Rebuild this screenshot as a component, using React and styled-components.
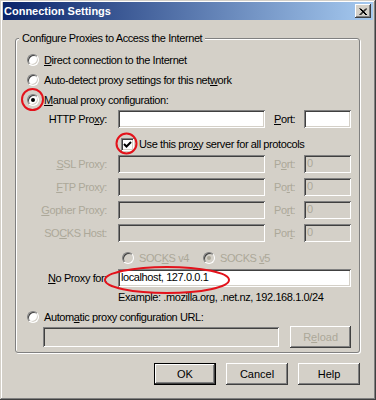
import React from "react";
import styled, { createGlobalStyle, css } from "styled-components";

const GlobalStyle = createGlobalStyle`
    html, body {
        margin: 0;
        padding: 0;
        background: #d4d0c8;
    }
    body {
        font-family: "Liberation Sans", Arial, sans-serif;
        font-size: 11px;
    }
`;

const sunken = css`
    box-shadow: inset 1px 1px #808080, inset -1px -1px #ffffff,
        inset 2px 2px #404040, inset -2px -2px #d4d0c8;
`;

const raised = css`
    box-shadow: inset -1px -1px #404040, inset 1px 1px #ffffff,
        inset -2px -2px #808080, inset 2px 2px #d4d0c8;
`;

const Window = styled.div`
    position: relative;
    width: 376px;
    height: 400px;
    box-sizing: border-box;
    padding: 2px 3px 3px 3px;
    background: #d4d0c8;
    box-shadow: inset -1px -1px #404040, inset 1px 1px #d4d0c8,
        inset -2px -2px #808080, inset 2px 2px #ffffff;
    display: flex;
    flex-direction: column;
    color: #000;
    font: 11px "Liberation Sans", Arial, sans-serif;
    letter-spacing: -0.4px;
`;

const TitleBar = styled.div`
    height: 18px;
    flex-shrink: 0;
    display: flex;
    align-items: center;
    justify-content: space-between;
    padding: 0 2px 0 1px;
    background: linear-gradient(to right, #0a246a, #a6caf0);
    color: #fff;
    font-weight: bold;
    letter-spacing: 0;
`;

const CloseButton = styled.div`
    width: 16px;
    height: 14px;
    box-sizing: border-box;
    background: #d4d0c8;
    display: flex;
    align-items: center;
    justify-content: center;
    ${raised};
`;

const GroupBox = styled.fieldset`
    margin: 12px 13px 0 12px;
    padding: 5px 8px 4px 11px;
    min-width: 0;
    border: 1px solid #808080;
    border-radius: 3px;
    box-shadow: inset 1px 1px #ffffff, 1px 1px #ffffff;
    display: flex;
    flex-direction: column;
`;

const Legend = styled.legend`
    margin-left: -8px;
    padding: 0 3px;
    line-height: 13px;
    background: #d4d0c8;
`;

const OptionRow = styled.label`
    display: flex;
    align-items: center;
    gap: 5px;
    height: ${(p) => p.$h || 20}px;
    color: ${(p) => (p.$disabled ? "#aca899" : "#000")};
    margin-left: ${(p) => p.$indent || 0}px;
`;

const Radio = styled.span`
    width: 12px;
    height: 12px;
    box-sizing: border-box;
    border-radius: 50%;
    flex-shrink: 0;
    border: 1px solid;
    border-color: #808080 #ffffff #ffffff #808080;
    box-shadow: inset 1px 1px #404040, inset -1px -1px #d4d0c8;
    background: ${(p) => (p.$disabled ? "#d4d0c8" : "#ffffff")};
    display: flex;
    align-items: center;
    justify-content: center;

    &::after {
        content: "";
        display: ${(p) => (p.$checked ? "block" : "none")};
        width: 4px;
        height: 4px;
        border-radius: 50%;
        background: ${(p) => (p.$disabled ? "#aca899" : "#000")};
    }
`;

const Check = styled.span`
    width: 13px;
    height: 13px;
    box-sizing: border-box;
    flex-shrink: 0;
    background: #ffffff;
    ${sunken};
    display: flex;
    align-items: center;
    justify-content: center;
`;

const ProxyGrid = styled.div`
    display: grid;
    grid-template-columns: 91px 147px 39px 47px;
    grid-template-rows: 23px 22px 23px 23px 23px 23px 22px 18px 20px;
    align-items: start;
`;

const FieldLabel = styled.span`
    line-height: 18px;
    text-align: ${(p) => (p.$left ? "left" : "right")};
    padding: ${(p) => (p.$left ? "0 0 0 9px" : "0 11px 0 0")};
    white-space: nowrap;
    color: ${(p) => (p.$disabled ? "#aca899" : "#000")};
`;

const TextBox = styled.div`
    height: ${(p) => p.$h || 18}px;
    box-sizing: border-box;
    padding: 0 3px;
    line-height: ${(p) => (p.$h || 18) - 1}px;
    white-space: nowrap;
    overflow: hidden;
    background: ${(p) => (p.$disabled ? "#d4d0c8" : "#ffffff")};
    color: ${(p) => (p.$disabled ? "#aca899" : "#000")};
    grid-column: ${(p) => p.$span || "auto"};
    ${sunken};
`;

const SpanRow = styled.div`
    grid-column: ${(p) => p.$span};
    align-self: ${(p) => p.$align || "center"};
    display: flex;
    align-items: center;
    gap: ${(p) => p.$gap || 0}px;
    padding-left: ${(p) => p.$pad || 0}px;
    color: ${(p) => (p.$disabled ? "#aca899" : "#000")};
    line-height: 20px;
    white-space: nowrap;
`;

const UrlRow = styled.div`
    display: flex;
    align-items: center;
    gap: 11px;
    margin-left: 16px;
    height: 22px;
`;

const UrlBox = styled(TextBox)`
    width: 237px;
`;

const Button = styled.div`
    width: ${(p) => p.$w || 62}px;
    height: 22px;
    box-sizing: border-box;
    display: flex;
    align-items: center;
    justify-content: center;
    background: #d4d0c8;
    color: ${(p) => (p.$disabled ? "#aca899" : "#000")};
    letter-spacing: 0;
    ${raised};
    ${(p) =>
        p.$default &&
        css`
            border: 1px solid #000;
            box-shadow: inset -1px -1px #404040, inset 1px 1px #ffffff,
                inset -2px -2px #808080;
        `}
`;

const ButtonRow = styled.div`
    display: flex;
    justify-content: flex-end;
    gap: 10px;
    margin: 10px 13px 0 0;
`;

const Annotations = styled.svg`
    position: absolute;
    left: 0;
    top: 0;
    pointer-events: none;
`;

function RadioOption({ checked, disabled, children, h, indent }) {
    return (
        <OptionRow $disabled={disabled} $h={h} $indent={indent}>
            <Radio $checked={checked} $disabled={disabled} />
            <span>{children}</span>
        </OptionRow>
    );
}

const proxies = [
    { label: <><u>S</u>SL Proxy:</>, port: <>P<u>o</u>rt:</> },
    { label: <><u>F</u>TP Proxy:</>, port: <>Po<u>r</u>t:</> },
    { label: <><u>G</u>opher Proxy:</>, port: <>Po<u>r</u>t:</> },
    { label: <>SO<u>C</u>KS Host:</>, port: <>Por<u>t</u>:</> },
];

export default function App() {
    return (
        <>
            <GlobalStyle />
            <Window>
                <TitleBar>
                    <span>Connection Settings</span>
                    <CloseButton>
                        <svg width="8" height="7" viewBox="0 0 8 7">
                            <path d="M0.5 0.5 L7 7 M1.5 0.5 L8 7 M7 0.5 L0.5 7 M8 0.5 L1.5 7" stroke="#000" strokeWidth="1" />
                        </svg>
                    </CloseButton>
                </TitleBar>

                <GroupBox>
                    <Legend>Configure Proxies to Access the Internet</Legend>
                    <RadioOption>
                        <u>D</u>irect connection to the Internet
                    </RadioOption>
                    <RadioOption>
                        Auto-detect proxy settings for this net<u>w</u>ork
                    </RadioOption>
                    <RadioOption checked>
                        <u>M</u>anual proxy configuration:
                    </RadioOption>

                    <ProxyGrid>
                        <FieldLabel>
                            HTTP Pro<u>x</u>y:
                        </FieldLabel>
                        <TextBox />
                        <FieldLabel $left>
                            <u>P</u>ort:
                        </FieldLabel>
                        <TextBox />

                        <SpanRow $span="2 / 5" $gap={5} $pad={3}>
                            <Check>
                                <svg width="9" height="9" viewBox="0 0 9 9">
                                    <path d="M1 4 L3.5 6.5 L8 2" stroke="#000" strokeWidth="2" fill="none" />
                                </svg>
                            </Check>
                            <span>
                                Use this pro<u>x</u>y server for all protocols
                            </span>
                        </SpanRow>

                        {proxies.map((row, i) => (
                            <React.Fragment key={i}>
                                <FieldLabel $disabled>{row.label}</FieldLabel>
                                <TextBox $disabled />
                                <FieldLabel $left $disabled>
                                    {row.port}
                                </FieldLabel>
                                <TextBox $disabled>0</TextBox>
                            </React.Fragment>
                        ))}

                        <SpanRow $span="2 / 5" $pad={4} $gap={0}>
                            <RadioOption disabled h={20}>
                                SOC<u>K</u>S v4
                            </RadioOption>
                            <RadioOption disabled checked h={20} indent={14}>
                                SOCKS <u>v</u>5
                            </RadioOption>
                        </SpanRow>

                        <FieldLabel>
                            <u>N</u>o Proxy for:
                        </FieldLabel>
                        <TextBox $span="2 / 5">localhost, 127.0.0.1</TextBox>

                        <SpanRow $span="2 / 5">
                            Example: .mozilla.org, .net.nz, 192.168.1.0/24
                        </SpanRow>
                    </ProxyGrid>

                    <RadioOption h={19}>
                        Autom<u>a</u>tic proxy configuration URL:
                    </RadioOption>
                    <UrlRow>
                        <UrlBox $disabled $h={20} />
                        <Button $disabled $w={61}>
                            R<u>e</u>load
                        </Button>
                    </UrlRow>
                </GroupBox>

                <ButtonRow>
                    <Button $default>OK</Button>
                    <Button>Cancel</Button>
                    <Button>Help</Button>
                </ButtonRow>

                <Annotations width="376" height="400" viewBox="0 0 376 400">
                    <g fill="none" stroke="#e3121b" strokeWidth="2">
                        <circle cx="32.5" cy="99.5" r="10.5" />
                        <circle cx="126.5" cy="143.5" r="10" />
                        <ellipse cx="167" cy="280" rx="62" ry="13" />
                    </g>
                </Annotations>
            </Window>
        </>
    );
}
